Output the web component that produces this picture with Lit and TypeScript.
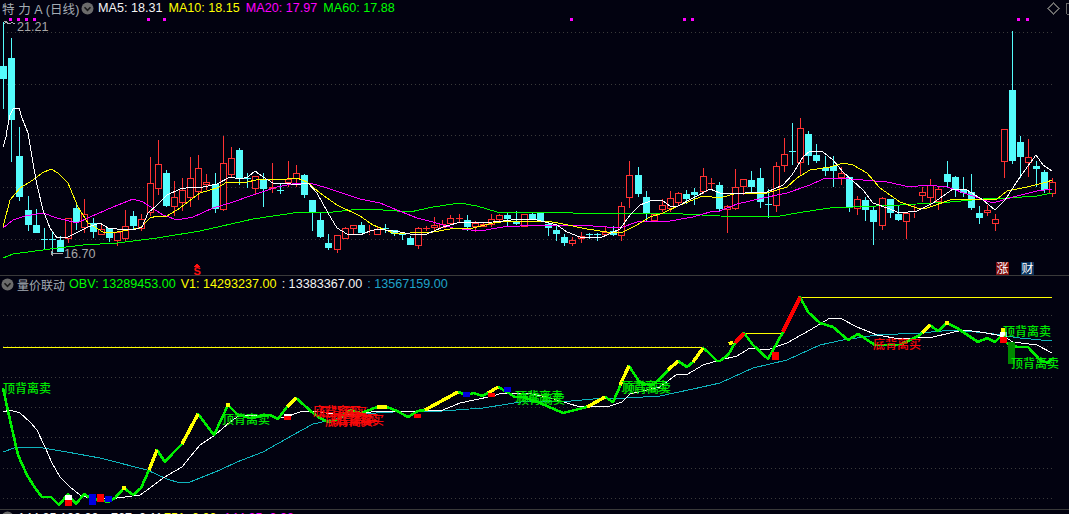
import { LitElement, html, css, svg } from "lit";
import { customElement } from "lit/decorators.js";

type C = [number, number, number, number, number];
const X = (i: number) => Math.round(3.17 + 8.133 * i);

// [top, bottom, high, low, up(1)/down(0)]
const CANDLES: C[] = [
  [66,79,22,109,0],[58,120,38,162,0],[156,197,127,201,0],[210,225,196,231,0],[225,233,209,233,0],[239,239,228,249,0],[239,239,231,253,0],[240,252,236,252,0],
  [218,239,218,243,1],[208,222,205,230,0],[214,228,199,233,1],[223,232,218,238,0],[229,235,225,235,1],[228,238,228,242,0],[232,241,232,246,1],[226,239,210,241,1],
  [216,226,211,230,0],[219,229,214,231,1],[183,213,157,216,1],[164,189,140,195,1],[173,206,170,207,0],[197,207,181,216,1],[190,203,178,211,1],[178,198,157,207,1],
  [168,192,155,200,1],[182,185,174,190,1],[184,209,173,213,0],[163,210,136,211,1],[158,175,147,178,1],[150,178,148,185,0],[178,178,173,188,0],[176,189,176,195,1],
  [179,189,173,207,0],[187,189,163,193,1],[190,190,183,194,0],[179,183,161,187,1],[173,179,165,187,1],[175,195,174,198,0],[200,213,200,231,0],[220,237,213,238,0],
  [243,248,234,250,0],[235,250,235,253,1],[228,239,227,239,1],[225,229,225,235,1],[225,233,222,233,0],[233,234,225,235,1],[229,235,227,235,1],[228,228,224,233,0],
  [230,234,230,236,0],[233,235,233,240,0],[238,245,236,245,0],[228,246,227,249,1],[228,228,226,231,1],[225,228,217,231,1],[224,228,220,228,1],[218,224,215,225,1],
  [218,218,214,222,1],[220,227,215,231,0],[223,227,221,232,1],[224,227,222,227,1],[219,225,214,227,1],[215,220,214,221,1],[215,219,213,227,0],[222,224,211,225,0],
  [214,227,214,227,1],[214,219,213,220,0],[213,222,212,222,0],[224,228,222,236,0],[230,234,225,241,0],[237,243,234,246,0],[240,244,237,246,1],[236,239,232,243,1],
  [234,234,233,239,0],[234,234,233,241,0],[232,235,227,236,1],[231,235,226,236,0],[206,236,202,241,1],[175,198,161,208,1],[175,194,167,197,0],[197,214,191,221,0],
  [214,221,214,221,1],[205,210,199,212,1],[198,209,191,212,1],[193,203,192,205,1],[194,199,190,204,0],[192,195,188,205,0],[176,192,168,194,1],[183,183,178,190,1],
  [185,209,182,212,0],[206,210,205,233,1],[187,209,169,210,1],[179,187,179,195,1],[180,187,171,192,0],[178,202,168,208,0],[204,204,189,218,0],[166,206,162,212,1],
  [154,166,138,172,1],[151,151,123,165,0],[128,163,118,176,1],[134,156,131,165,0],[155,161,144,163,0],[168,171,156,176,0],[166,171,156,187,0],[173,178,167,185,1],
  [177,207,177,212,0],[199,209,196,215,1],[200,210,197,221,0],[210,222,206,245,0],[198,226,197,230,1],[199,213,199,218,0],[214,220,206,221,0],[213,222,213,239,1],
  [212,213,205,218,1],[192,196,187,202,1],[185,198,179,207,1],[189,202,187,210,1],[174,182,161,187,0],[177,190,176,197,0],[190,193,177,197,0],[192,208,174,210,0],
  [213,218,206,224,0],[210,213,205,216,1],[219,224,214,231,1],[129,162,129,178,1],[90,161,31,164,0],[142,157,136,178,0],[157,163,139,177,1],[166,169,161,187,0],
  [172,190,170,193,0],[182,194,178,197,1],
];

const MA5 = "3,147 6,137 7,130 10,115 13,109 19,108 22,118 28,133 33,163 37,185 43,210 50,228 57,238 68,237 78,232 88,227 100,223 108,228 117,229 133,230 142,227 148,213 157,205 167,195 180,189 193,187 203,187 217,184 230,177 240,179 248,177 255,171 263,177 273,183 287,183 295,185 308,183 317,193 328,213 337,228 347,234 360,235 370,231 378,229 400,232 410,234 427,234 443,227 457,223 493,222 503,221 520,219 537,220 557,225 567,232 580,237 600,238 620,229 630,215 640,205 653,200 663,201 670,206 678,206 693,198 710,189 720,193 733,193 745,193 767,192 783,185 792,175 803,157 810,151 823,152 833,160 843,172 863,190 873,203 887,208 900,213 917,211 933,203 953,189 967,190 983,200 995,210 1005,200 1020,177 1036,155 1043,165 1052,171";
const MA10 = "3,227 10,200 20,188 33,180 42,173 51,169 58,173 68,183 78,207 88,223 103,232 117,232 140,228 150,218 157,216 167,216 180,208 200,193 217,188 227,182 243,183 260,179 277,180 297,178 307,182 320,193 337,205 360,216 373,225 393,233 410,233 433,232 450,229 473,228 493,223 510,221 547,221 563,224 587,229 607,232 623,232 637,225 650,217 663,213 680,205 703,196 720,198 737,193 767,193 787,187 797,178 810,170 830,167 843,163 853,165 867,173 880,188 900,202 917,208 927,208 953,199 997,199 1007,191 1027,187 1047,182 1052,180";
const MA20 = "3,228 13,220 25,216 43,213 57,218 77,223 90,217 113,207 133,199 143,202 163,215 177,220 193,217 213,208 233,202 253,195 277,187 297,183 310,183 327,188 360,199 380,203 397,210 417,218 433,222 453,228 480,231 503,227 537,225 573,225 593,226 620,228 637,222 670,221 693,217 710,212 720,211 737,204 763,198 787,193 810,185 823,179 837,178 863,180 887,182 910,187 927,185 947,187 970,195 993,203 1013,197 1037,191 1052,189";
const MA60 = "3,258 13,254 50,249 83,245 117,243 157,238 200,231 253,219 300,212 333,212 360,209 383,210 410,212 433,207 460,203 477,206 497,212 527,212 567,212 573,213 620,213 683,214 720,216 757,217 780,216 803,212 830,208 853,207 900,205 950,202 983,199 1007,198 1037,196 1052,193";

const OBV = "3,388 10,420 18,455 27,475 35,488 42,497 51,497 59,505 68,494 76,504 84,494 92,499 100,500 108,502 115,498 124,488 133,495 141,488 149,470 157,450 165,462 173,453 182,444 198,414 214,435 228,405 238,415 250,418 262,416 270,415 278,419 287,407 296,398 313,413 320,418 328,422 337,420 350,410 360,413 367,411 377,407 387,407 397,411 408,417 418,411 425,410 458,392 467,395 474,393 482,396 488,393 498,387 507,392 515,397 523,397 540,403 563,413 587,407 605,397 613,402 629,366 640,383 653,385 678,361 687,367 693,362 703,348 707,351 717,361 720,361 728,355 735,343 744,333 753,345 768,359 783,332 800,297 808,312 820,323 833,327 848,340 858,334 875,345 900,345 920,335 930,325 938,331 947,323 957,328 978,342 987,338 995,342 1000,337 1007,343 1017,347 1028,347 1040,360 1048,363 1052,358";
const V1 = "3,412 10,410 20,413 30,422 37,430 45,447 52,463 60,477 70,487 80,495 92,499 117,498 140,495 150,488 163,478 182,467 190,457 200,445 215,435 230,422 240,415 263,415 283,418 300,412 313,411 333,414 360,414 377,411 403,412 443,410 460,403 493,396 502,393 527,393 547,397 567,403 580,407 610,406 622,402 630,394 643,391 660,387 677,374 688,374 703,365 720,360 737,356 750,348 767,350 787,343 810,330 830,318 840,318 857,327 877,335 900,339 933,337 963,330 980,332 1003,336 1013,342 1037,345 1052,353";
const CY = "3,452 17,447 37,447 67,452 100,458 147,470 167,479 180,483 190,482 220,470 237,462 263,452 293,435 313,424 360,414 393,412 443,411 483,408 527,401 560,402 593,399 627,398 660,396 693,389 720,383 753,368 787,360 820,345 843,340 877,335 920,333 953,330 987,333 1020,338 1052,341";

const YEL = ["149,470 157,450","182,444 198,414","226,405 230,405","287,407 296,398","377,407 387,407","425,410 458,392","488,393 498,387","587,407 605,397","620,385 629,366","668,370 678,361","693,362 703,348","922,333 930,325","945,323 949,323","729,344 733,342","122,488 126,488","1001,330 1005,330"];
const RED = ["735,343 744,333","783,332 800,297"];

const MARKS: [number, number, number, number, string][] = [
  [65,500,7,6,"#ff0000"],[65,495,7,5,"#ffffff"],[89,494,7,11,"#0000e0"],[97,494,7,8,"#ff0000"],[105,496,7,6,"#0000e0"],
  [284,416,7,4,"#ff0000"],[284,414,7,2,"#ffffff"],[414,414,7,4,"#ff0000"],[463,392,7,5,"#0000e0"],[488,393,7,4,"#ff0000"],[504,387,7,5,"#0000e0"],
  [772,352,7,8,"#ff0000"],[1000,337,7,6,"#ff0000"],[1000,332,7,5,"#ffffff"],[1008,342,7,22,"#008800"],
];
const GREEN_TXT: [number, number][] = [[3,393],[222,424],[515,401],[517,404],[621,391],[623,393],[1003,336],[1011,368]];
const RED_TXT: [number, number][] = [[313,416],[319,417],[325,426],[330,424],[336,425],[873,349]];
const DOTS = [9,17,25,33,147,163,570,683,691,1017,1026];
const GRID = [32,84,135,187,239,315,346,377,407,437,468,498];

@customElement("app-root")
export class AppRoot extends LitElement {
  static styles = css`
    :host { display: block; width: 1069px; height: 514px; overflow: hidden; background: #020210; }
    .stage { display: grid; width: 1069px; height: 514px; overflow: hidden; }
    .stage > * { grid-area: 1 / 1; }
    svg.chart { display: block; width: 1069px; height: 514px; }
    .panels { display: flex; flex-direction: column; height: 514px; font: 12.6px "Liberation Sans", "Noto Sans CJK SC", sans-serif; }
    .legend { display: flex; align-items: center; white-space: nowrap; }
    .top { height: 276px; box-sizing: border-box; border-bottom: 1px solid #3a3a3a; flex: none; }
    .mid { height: 234px; box-sizing: border-box; border-bottom: 1px solid #3a3a3a; flex: none; }
    .bot { height: 4px; flex: none; }
    .top .legend { height: 16px; }
    .mid .legend { height: 16px; }
    .bot .legend { height: 15px; padding-left: 1px; }
    .name { color: #a4acb4; font-size: 12.5px; }
    .ch { width: 13px; height: 13px; display: block; flex: none; }
    .w { color: #f4f4f4; } .y { color: #ffff00; } .m { color: #ff00ff; } .g { color: #00ff00; } .c { color: #1fa3c8; }
    .top .name { margin-left: 2px; width: 79px; flex: none; letter-spacing: 0.1px; }
    .top .name .sp { margin-right: 1px; }
    .top .ch { margin-right: 4px; }
    .top .legend > span + span { margin-left: 6px; }
    .top .legend .ma5 { margin-left: 0; }
    .mid .ch { margin-left: 1px; margin-right: 3px; }
    .mid .name { font-size: 12px; width: 52px; flex: none; }
    .mid .legend span + span { margin-left: 5px; }
    .mid .legend .name + span { margin-left: 0; }
    .bot .ch { margin-right: 4px; }
    .bot .a { width: 93px; flex: none; }
    .bot .b { width: 53px; flex: none; }
    .bot .d { width: 60px; flex: none; }
  `;

  private chev() {
    return html`<svg class="ch" viewBox="0 0 13 13"><circle cx="6.5" cy="6.5" r="6" fill="#6b6b6b"/><path d="M3.5 5.2 6.5 8.4 9.5 5.2" fill="none" stroke="#1a1a1a" stroke-width="1.6"/></svg>`;
  }

  private chart() {
    const candles = CANDLES.map((c, i) => {
      const x = X(i);
      const [t, b, h, l, up] = c;
      const col = up ? "#ff3232" : "#54fcfc";
      if (t === b) {
        return svg`<path d="M${x + .5} ${h}V${l}M${x - 3} ${t + .5}H${x + 4}" stroke=${col} fill="none"/>`;
      }
      if (up) {
        return svg`<path d="M${x + .5} ${h}V${t}M${x + .5} ${b}V${l}" stroke=${col} fill="none"/><rect x=${x - 2.5} y=${t + .5} width="6" height=${b - t - 1} fill="#020210" stroke=${col}/>`;
      }
      return svg`<path d="M${x + .5} ${h}V${l}" stroke=${col} fill="none"/><rect x=${x - 3} y=${t} width="7" height=${b - t} fill=${col}/>`;
    });
    return html`<svg class="chart" viewBox="0 0 1069 514" shape-rendering="crispEdges">
      ${GRID.map((y) => svg`<line x1="3" x2="1055" y1=${y + .5} y2=${y + .5} stroke="#3a3a3a" stroke-dasharray="1 3"/>`)}
      ${candles}
      <polyline points=${MA60} fill="none" stroke="#00ff00" stroke-width="1"/>
      <polyline points=${MA20} fill="none" stroke="#ff00ff" stroke-width="1"/>
      <polyline points=${MA10} fill="none" stroke="#ffff00" stroke-width="1"/>
      <polyline points=${MA5} fill="none" stroke="#ffffff" stroke-width="1"/>
      ${DOTS.map((x) => svg`<rect x=${x} y="18" width="3" height="3" fill="#ff00ff"/>`)}
      <path d="M4 24 6 21.5 M3.5 21.5H7 M6 22 9 24 12 22.5 15 24" fill="none" stroke="#b0b0b0"/>
      <text x="17" y="31" fill="#a8a8a8" font-family="Liberation Sans" font-size="12.6">21.21</text>
      <path d="M53 250 51 253 53 256 M51 253H63" fill="none" stroke="#a8a8a8"/>
      <text x="64" y="258" fill="#a8a8a8" font-family="Liberation Sans" font-size="12.6">16.70</text>
      <path d="M197 263 194 267H200Z" fill="#ff1010"/>
      <text x="193.5" y="274.5" fill="#ff1010" font-family="Liberation Sans" font-size="11" font-weight="700">S</text>
      <rect x="996" y="262" width="13" height="13" fill="#7e0b0b"/>
      <text x="996.5" y="273" fill="#fff" font-family="Noto Sans CJK SC" font-size="12">涨</text>
      <rect x="1021" y="262" width="13" height="13" fill="#0a3560"/>
      <text x="1021.5" y="273" fill="#fff" font-family="Noto Sans CJK SC" font-size="12">财</text>
      <path d="M1053.5 3 1059 8.5 1053.5 14 1048 8.5Z" fill="none" stroke="#6a6a6a"/>
      <path d="M1069 3H1067Q1066 3 1066 4V13Q1066 14 1067 14H1069" fill="none" stroke="#6a6a6a"/>

      <path d="M3 347.5H703M744 333.5H783M800 297.5H1052" stroke="#ffff00" fill="none"/>
      <polyline points=${CY} fill="none" stroke="#0fb4bc" stroke-width="1"/>
      <polyline points=${V1} fill="none" stroke="#ffffff" stroke-width="1"/>
      ${MARKS.slice(0, 4).map((m) => svg`<rect x=${m[0]} y=${m[1]} width=${m[2]} height=${m[3]} fill=${m[4]}/>`)}
      <polyline points=${OBV} fill="none" stroke="#00f000" stroke-width="2.6" stroke-linejoin="round"/>
      ${YEL.map((p) => svg`<polyline points=${p} fill="none" stroke="#ffff00" stroke-width="3.4"/>`)}
      ${RED.map((p) => svg`<polyline points=${p} fill="none" stroke="#ff0000" stroke-width="4"/>`)}
      ${MARKS.map((m) => svg`<rect x=${m[0]} y=${m[1]} width=${m[2]} height=${m[3]} fill=${m[4]}/>`)}
      ${GREEN_TXT.map((t) => svg`<text x=${t[0]} y=${t[1]} fill="#00e800" font-family="Noto Sans CJK SC" font-size="12" font-weight="500">顶背离卖</text>`)}
      ${RED_TXT.map((t) => svg`<text x=${t[0]} y=${t[1]} fill="#f80808" font-family="Noto Sans CJK SC" font-size="12" font-weight="500">底背离买</text>`)}
    </svg>`;
  }

  render() {
    return html`<div class="stage">
      ${this.chart()}
      <div class="panels">
        <div class="top">
          <div class="legend">
            <span class="name">特 力 A (日线)</span>${this.chev()}
            <span class="w ma5">MA5: 18.31</span>
            <span class="y">MA10: 18.15</span>
            <span class="m">MA20: 17.97</span>
            <span class="g">MA60: 17.88</span>
          </div>
        </div>
        <div class="mid">
          <div class="legend">
            ${this.chev()}<span class="name">量价联动</span>
            <span class="g">OBV: 13289453.00</span>
            <span class="y">V1: 14293237.00</span>
            <span class="w">: 13383367.00</span>
            <span class="c">: 13567159.00</span>
          </div>
        </div>
        <div class="bot">
          <div class="legend">
            ${this.chev()}
            <span class="w a">144.35 100.00</span>
            <span class="w b">767: 0.11</span>
            <span class="y d">751: 0.00</span>
            <span class="m">144.35: 0.00</span>
          </div>
        </div>
      </div>
    </div>`;
  }
}
